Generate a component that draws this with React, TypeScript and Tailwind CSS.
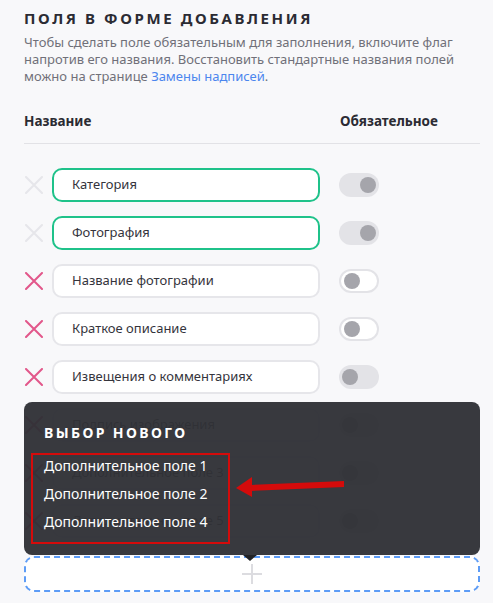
import React from "react";

const font = { fontFamily: '"Noto Sans", "Open Sans", sans-serif' };

interface Field {
  name: string;
  locked: boolean; // system field, can't be removed
  on: boolean;
  border?: boolean;
}

const fields: Field[] = [
  { name: "Категория", locked: true, on: true },
  { name: "Фотография", locked: true, on: true },
  { name: "Название фотографии", locked: false, on: false, border: true },
  { name: "Краткое описание", locked: false, on: false, border: true },
  { name: "Извещения о комментариях", locked: false, on: false },
  { name: "Подпись изображения", locked: false, on: false },
  { name: "Дополнительное поле 3", locked: false, on: false },
  { name: "Дополнительное поле 5", locked: false, on: false },
];

function Cross({ locked }: { locked: boolean }) {
  return (
    <svg width="18" height="18" viewBox="0 0 18 18" className="shrink-0">
      <path
        d="M1 1 L17 17 M17 1 L1 17"
        stroke={locked ? "#e6e6ea" : "#e2578a"}
        strokeWidth="2"
        strokeLinecap="round"
      />
    </svg>
  );
}

function Toggle({ on, border }: { on: boolean; border?: boolean }) {
  return (
    <div
      className={
        "flex h-[24px] w-[40px] items-center rounded-full px-[3px] " +
        (border ? "border-2 border-[#e3e3e7] bg-white" : "bg-[#e3e3e7]") +
        (on ? " justify-end" : " justify-start")
      }
    >
      <div className="h-[16px] w-[16px] rounded-full bg-[#a5a5ab]" />
    </div>
  );
}

function Row({ f }: { f: Field }) {
  return (
    <div className="flex h-[34px] items-center">
      <div className="flex w-[28px] justify-start pl-px">
        <Cross locked={f.locked} />
      </div>
      <div
        className={
          "flex h-[34px] w-[268px] items-center rounded-[10px] border-2 bg-white pl-[18px] text-[13px] text-[#34343c] " +
          (f.locked ? "border-[#1fc28a]" : "border-[#e6e6ea]")
        }
      >
        {f.name}
      </div>
      <div className="ml-[19px]">
        <Toggle on={f.on} border={f.border} />
      </div>
    </div>
  );
}

export default function App() {
  return (
    <div className="min-h-screen bg-[#f8f8fa] pl-6 pr-[13px] pt-2" style={font}>
      <h2 className="text-[15px] font-bold leading-[20px] tracking-[2.6px] text-[#2b2b33]">
        ПОЛЯ В ФОРМЕ ДОБАВЛЕНИЯ
      </h2>
      <p className="mt-[6px] w-[445px] text-[13px] leading-[17px] text-[#707079]">
        Чтобы сделать поле обязательным для заполнения, включите флаг напротив его названия.
        Восстановить стандартные названия полей можно на странице{" "}
        <span className="text-[#4c86ee]">Замены надписей</span>.
      </p>

      <div className="mt-[26px] flex border-b border-[#e2e2e6] pb-[12px] text-[13.5px] font-bold leading-[20px] text-[#2b2b33]">
        <div className="w-[316px]">Название</div>
        <div>Обязательное</div>
      </div>

      <div className="mt-[24px] flex flex-col gap-[14px]">
        {fields.map((f) => (
          <Row key={f.name} f={f} />
        ))}
      </div>

      {/* add new field */}
      <div className="relative mt-[18px]">
        <div className="absolute bottom-full left-0 right-0 mb-px h-[153px] rounded-[8px] bg-[#303136]/[0.96] px-5 pt-[21px]">
          <div className="text-[14px] font-bold leading-[20px] tracking-[2.4px] text-white">ВЫБОР НОВОГО</div>
          <div className="relative -ml-[13px] mt-[10px] w-[199px] border-2 border-[#d40b0b] pb-[3px] pl-[11px]">
            {["Дополнительное поле 1", "Дополнительное поле 2", "Дополнительное поле 4"].map((t) => (
              <div key={t} className="h-[28px] text-[14px] leading-[22px] text-white">
                {t}
              </div>
            ))}
          </div>
          <svg className="absolute left-[210px] top-[70px]" width="112" height="28" viewBox="0 0 112 28">
            <path d="M17 13 L110 9 L110 15 L17 19 Z" fill="#d40b0b" />
            <path d="M2 16 L18 5 L18 25 Z" fill="#d40b0b" />
          </svg>
          <div className="absolute -bottom-[6px] left-[219px] h-0 w-0 border-x-[7px] border-t-[6px] border-x-transparent border-t-[#222326]" />
        </div>
        <div className="flex h-[36px] items-center justify-center rounded-[10px] border-2 border-dashed border-[#5d9cf6] bg-white">
          <svg width="22" height="22" viewBox="0 0 22 22">
            <path d="M11 1 V21 M1 11 H21" stroke="#dcdce0" strokeWidth="2" />
          </svg>
        </div>
      </div>
    </div>
  );
}
